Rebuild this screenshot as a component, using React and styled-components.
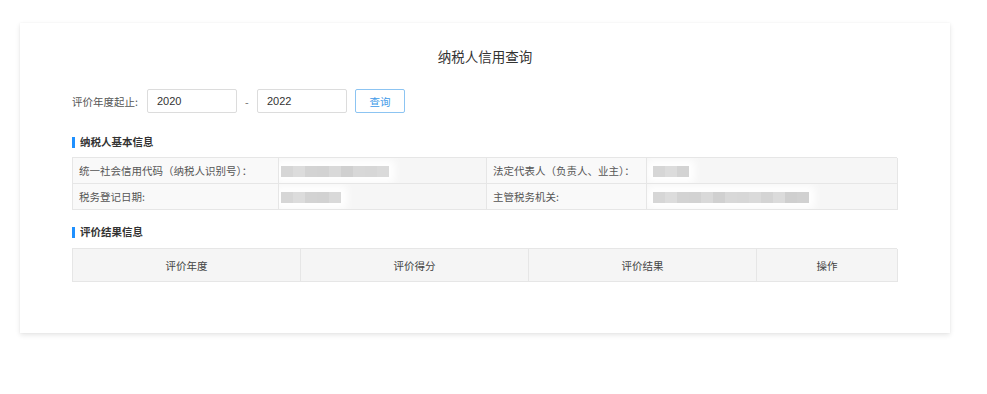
import styled, { createGlobalStyle } from 'styled-components'

const Global = createGlobalStyle`
  body {
    margin: 0;
    background: #fff;
    font-family: "Microsoft YaHei", "Noto Sans CJK SC", "Noto Sans", sans-serif;
    color: #333;
  }
`

const Page = styled.div`
  padding: 23px 0 61px 20px;
`

const Card = styled.div`
  width: 930px;
  height: 310px;
  box-sizing: border-box;
  background: #fff;
  box-shadow: 0 2px 5px rgba(0, 0, 0, 0.1), 0 0 2px rgba(0, 0, 0, 0.04);
  padding: 23px 53px 0 52px;
`

const Title = styled.div`
  text-align: center;
  font-size: 13.5px;
  line-height: 20px;
  color: #333;
  margin-left: 1px;
`

const Filter = styled.div`
  display: flex;
  align-items: center;
  margin-top: 23px;
  height: 24px;
  font-size: 10.5px;
`

const Label = styled.span`
  color: #555;
  margin-right: 9px;
`

const Input = styled.div`
  width: 90px;
  height: 24px;
  box-sizing: border-box;
  border: 1px solid #dcdcdc;
  border-radius: 2px;
  padding-left: 9px;
  display: flex;
  align-items: center;
  color: #333;
  font-size: 11px;
  font-family: "Liberation Sans", "Noto Sans CJK SC", sans-serif;
`

const Dash = styled.span`
  width: 20px;
  text-align: center;
  color: #666;
`

const Button = styled.button`
  margin-left: 8px;
  width: 50px;
  height: 24px;
  border: 1px solid #8cc4f2;
  border-radius: 2px;
  background: #fff;
  color: #3d9ae8;
  font-size: 10.5px;
  font-family: inherit;
  padding: 0;
`

const SectionHead = styled.div`
  display: flex;
  align-items: center;
  font-size: 10.5px;
  font-weight: bold;
  color: #333;
  line-height: 16px;
  margin-top: ${(p) => p.$top}px;
  &::before {
    content: '';
    width: 3px;
    height: 11px;
    background: #1e90ff;
    margin-right: 5px;
  }
`

const InfoGrid = styled.div`
  display: grid;
  grid-template-columns: 206px 208px 160px 251px;
  grid-auto-rows: 26px;
  margin-top: 7px;
  border-top: 1px solid #e6e6e6;
  border-left: 1px solid #e6e6e6;
  font-size: 10.5px;
`

const Cell = styled.div`
  border-right: 1px solid #e6e6e6;
  border-bottom: 1px solid #e6e6e6;
  background: ${(p) => (p.$label ? '#f9f9f9' : '#f6f6f6')};
  color: #555;
  display: flex;
  align-items: center;
  padding-left: ${(p) => (p.$label ? 6 : 2)}px;
  overflow: hidden;
  white-space: nowrap;
`

const Mosaic = styled.div`
  display: flex;
  box-shadow: 0 0 8px 6px #fff;
  background: #fff;
  margin-top: 2px;
`

const Block = styled.div`
  width: 12px;
  height: 11px;
`

const Table = styled.div`
  display: grid;
  grid-template-columns: 228px 228px 228px 141px;
  margin-top: 8px;
  border-top: 1px solid #e6e6e6;
  border-left: 1px solid #e6e6e6;
`

const Th = styled.div`
  height: 32px;
  display: flex;
  align-items: center;
  justify-content: center;
  background: #f5f5f5;
  border-right: 1px solid #e6e6e6;
  border-bottom: 1px solid #e6e6e6;
  font-size: 10.5px;
  color: #444;
`

const shades = ['#d6d6d6', '#dadada', '#d2d2d2', '#cfcfcf', '#d8d8d8', '#dcdcdc', '#d4d4d4', '#d9d9d9', '#d1d1d1', '#d7d7d7', '#d3d3d3', '#dbdbdb', '#d0d0d0']

function Blur({ n }) {
  return (
    <Mosaic>
      {Array.from({ length: n }).map((_, i) => (
        <Block key={i} style={{ background: shades[(i * 5) % shades.length] }} />
      ))}
    </Mosaic>
  )
}

export default function App() {
  return (
    <Page>
      <Global />
      <Card>
        <Title>纳税人信用查询</Title>
        <Filter>
          <Label>评价年度起止:</Label>
          <Input>2020</Input>
          <Dash>-</Dash>
          <Input>2022</Input>
          <Button>查询</Button>
        </Filter>

        <SectionHead $top={21}>纳税人基本信息</SectionHead>
        <InfoGrid>
          <Cell $label>统一社会信用代码（纳税人识别号）：</Cell>
          <Cell><Blur n={9} /></Cell>
          <Cell $label>法定代表人（负责人、业主）：</Cell>
          <Cell style={{ paddingLeft: 6 }}><Blur n={3} /></Cell>
          <Cell $label>税务登记日期:</Cell>
          <Cell><Blur n={5} /></Cell>
          <Cell $label>主管税务机关:</Cell>
          <Cell style={{ paddingLeft: 6 }}><Blur n={13} /></Cell>
        </InfoGrid>

        <SectionHead $top={14}>评价结果信息</SectionHead>
        <Table>
          <Th>评价年度</Th>
          <Th>评价得分</Th>
          <Th>评价结果</Th>
          <Th>操作</Th>
        </Table>
      </Card>
    </Page>
  )
}
